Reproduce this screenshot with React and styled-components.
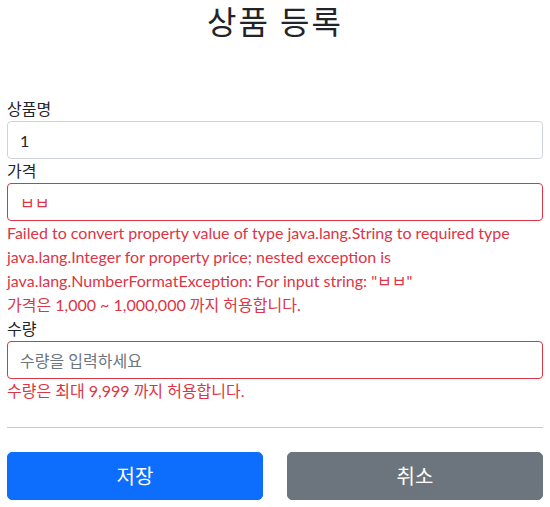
import React from 'react';
import styled, { createGlobalStyle } from 'styled-components';

const GlobalStyle = createGlobalStyle`
  * { box-sizing: border-box; }
  body {
    margin: 0;
    background: #fff;
    color: #212529;
    font-family: Lato, "Noto Sans CJK KR", sans-serif;
    font-size: 16px;
    line-height: 1.5;
  }
`;

const Container = styled.div`
  padding: 0 7px;
`;

const Header = styled.div`
  padding: 3px 0 48px;
  text-align: center;
`;

const Title = styled.h2`
  margin: 0 0 8px;
  font-size: 32px;
  font-weight: 400;
  line-height: 1.2;
  letter-spacing: 2px;
`;

const Label = styled.label`
  display: block;
`;

const Input = styled.input`
  display: block;
  width: 100%;
  height: 38px;
  padding: 6px 12px;
  font: inherit;
  line-height: 1.5;
  color: ${p => (p.$error ? '#dc3545' : '#212529')};
  background: #fff;
  border: 1px solid ${p => (p.$error ? '#dc3545' : '#ced4da')};
  border-radius: 4px;
  outline: none;
  &::placeholder { color: #6c757d; }
`;

const FieldError = styled.div`
  color: #dc3545;
`;

const Divider = styled.hr`
  margin: 24px 0;
  border: 0;
  border-top: 1px solid #c8c9ca;
`;

const ButtonRow = styled.div`
  display: grid;
  grid-template-columns: 1fr 1fr;
  gap: 24px;
`;

const Button = styled.button`
  height: 48px;
  padding: 8px 16px;
  font: inherit;
  font-size: 20px;
  line-height: 1.5;
  color: #fff;
  background: ${p => (p.$variant === 'secondary' ? '#6c757d' : '#0d6efd')};
  border: 1px solid ${p => (p.$variant === 'secondary' ? '#6c757d' : '#0d6efd')};
  border-radius: 5px;
`;

export default function App() {
  return (
    <Container>
      <GlobalStyle />
      <Header>
        <Title>상품 등록</Title>
      </Header>
      <form onSubmit={e => e.preventDefault()}>
        <div>
          <Label htmlFor="itemName">상품명</Label>
          <Input id="itemName" defaultValue="1" />
        </div>
        <div>
          <Label htmlFor="price">가격</Label>
          <Input id="price" defaultValue="ㅂㅂ" $error />
          <FieldError>
            Failed to convert property value of type java.lang.String to required type java.lang.Integer for property price; nested exception is java.lang.NumberFormatException: For input string: "ㅂㅂ"
          </FieldError>
          <FieldError>가격은 1,000 ~ 1,000,000 까지 허용합니다.</FieldError>
        </div>
        <div>
          <Label htmlFor="quantity">수량</Label>
          <Input id="quantity" placeholder="수량을 입력하세요" $error />
          <FieldError>수량은 최대 9,999 까지 허용합니다.</FieldError>
        </div>
        <Divider />
        <ButtonRow>
          <Button type="submit">저장</Button>
          <Button type="button" $variant="secondary">취소</Button>
        </ButtonRow>
      </form>
    </Container>
  );
}
